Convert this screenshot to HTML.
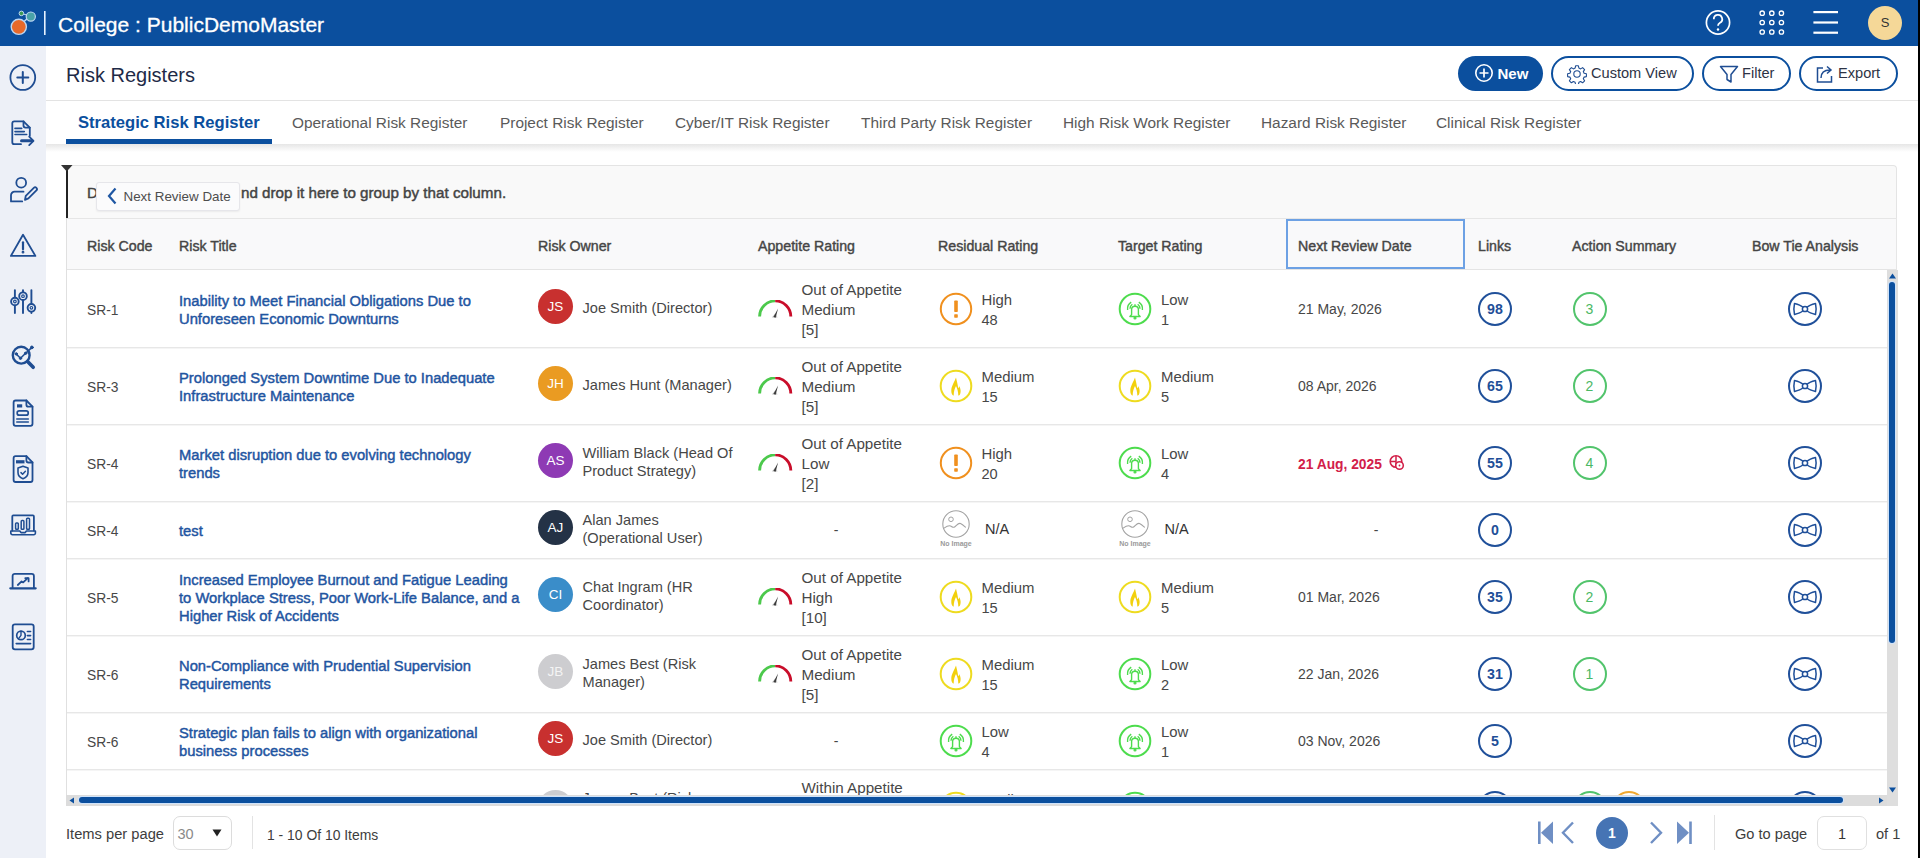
<!DOCTYPE html><html><head><meta charset="utf-8"><style>
html,body{margin:0;padding:0;width:1920px;height:858px;overflow:hidden;background:#fff;font-family:"Liberation Sans", sans-serif;}
.t{position:absolute;white-space:nowrap;}
.b{position:absolute;}
</style></head><body><div class="b" style="left:0px;top:0px;width:1918px;height:46px;background:#0b4f9e"></div><div class="b" style="left:1918px;top:0px;width:2px;height:858px;background:#000"></div><svg class="b" style="left:0px;top:0px;" width="46" height="46" viewBox="0 0 46 46"><circle cx="18.8" cy="26.8" r="7.6" fill="#e8692a" stroke="#bcd6f2" stroke-width="1.4"/>
<line x1="24" y1="21.5" x2="28" y2="18" stroke="#bcd6f2" stroke-width="1.6"/>
<circle cx="30.8" cy="16.6" r="4.6" fill="#4aa3a8" stroke="#bcd6f2" stroke-width="1.2"/>
<line x1="23" y1="14" x2="27" y2="15" stroke="#bcd6f2" stroke-width="1.2"/>
<circle cx="21.4" cy="13.4" r="2.3" fill="#3b9a55" stroke="#bcd6f2" stroke-width="1"/>
<rect x="44" y="11" width="1.6" height="24" fill="#e6f2ff"/></svg><div class="t " style="left:58px;top:12.42px;font-size:21px;line-height:25.2px;color:#fff;font-weight:400;;-webkit-text-stroke:0.3px #fff">College : PublicDemoMaster</div><svg class="b" style="left:1700px;top:4px;" width="36" height="36" viewBox="0 0 36 36"><circle cx="18" cy="18.5" r="11.6" fill="none" stroke="#fff" stroke-width="1.7"/>
<path d="M13.8 15.2 a4.2 4.2 0 1 1 6.2 3.6 c-1.4 .8 -2 1.5 -2 3" fill="none" stroke="#fff" stroke-width="1.8"/>
<circle cx="18" cy="25.5" r="1.2" fill="#fff"/></svg><svg class="b" style="left:1754px;top:4px;" width="36" height="36" viewBox="0 0 36 36"><circle cx="8.2" cy="9.2" r="2.2" fill="none" stroke="#fff" stroke-width="1.3"/><circle cx="8.2" cy="18.5" r="2.2" fill="none" stroke="#fff" stroke-width="1.3"/><circle cx="8.2" cy="28" r="2.2" fill="none" stroke="#fff" stroke-width="1.3"/><circle cx="17.8" cy="9.2" r="2.2" fill="none" stroke="#fff" stroke-width="1.3"/><circle cx="17.8" cy="18.5" r="2.2" fill="none" stroke="#fff" stroke-width="1.3"/><circle cx="17.8" cy="28" r="2.2" fill="none" stroke="#fff" stroke-width="1.3"/><circle cx="27.4" cy="9.2" r="2.2" fill="none" stroke="#fff" stroke-width="1.3"/><circle cx="27.4" cy="18.5" r="2.2" fill="none" stroke="#fff" stroke-width="1.3"/><circle cx="27.4" cy="28" r="2.2" fill="none" stroke="#fff" stroke-width="1.3"/></svg><svg class="b" style="left:1810px;top:4px;" width="32" height="36" viewBox="0 0 32 36"><rect x="3.4" y="7" width="24.6" height="2.2" fill="#fff"/><rect x="3.4" y="17.4" width="24.6" height="2.2" fill="#fff"/><rect x="3.4" y="27.6" width="24.6" height="2.2" fill="#fff"/></svg><div class="b" style="left:1868px;top:6px;width:34px;height:34px;background:#f5d898;border-radius:50%"></div><div class="t" style="left:1785.0px;width:200px;text-align:center;top:15.20px;font-size:13px;line-height:15.6px;color:#333;font-weight:400;">S</div><div class="b" style="left:0px;top:46px;width:46px;height:812px;background:#edf0f7"></div><svg class="b" style="left:0px;top:0px;" width="46" height="700" viewBox="0 0 46 700"><g fill="none" stroke="#1f4d92" stroke-width="1.8" stroke-linecap="round" stroke-linejoin="round">
<circle cx="22.8" cy="77.5" r="12.4"/><path d="M22.8 72v11M17.3 77.5h11" stroke-width="2"/>
<path d="M21 144.2H14.3a2 2 0 0 1-2-2V123.3a2 2 0 0 1 2-2h9.2l6.3 6.3v8.2"/><path d="M23.5 121.3v4.3a2 2 0 0 0 2 2h4.3"/>
<path d="M15 128.4h6.7M15 131.6h9.3M15 134.5h11.7" stroke-width="1.6"/>
<path d="M21.5 140.8h10.5" stroke-width="3"/><path d="M29.2 136.6l4.3 4.2-4.3 4.3"/>
<circle cx="21.2" cy="182.7" r="4.9"/><path d="M23.5 191.7h-8.9a3.6 3.6 0 0 0-3.6 3.6v6.1h11.2"/><path d="M25 199.8l.8-4 8-8a1.8 1.8 0 0 1 2.6 2.6l-8 8z"/>
<path d="M23 234.7L10.9 255.9h24.5z"/><path d="M23 242.3v7" stroke-width="2.2"/><circle cx="23" cy="252.2" r="0.6" stroke-width="1.6"/>
<path d="M14.9 290.1v22.9M23 290.1v22.9M31.4 290.1v22.9" stroke-width="1.9"/>
<circle cx="14.9" cy="301.5" r="3.8" fill="#edf0f7" stroke-width="1.9"/><circle cx="23" cy="296.2" r="3.8" fill="#edf0f7" stroke-width="1.9"/><circle cx="31.4" cy="307.8" r="3.8" fill="#edf0f7" stroke-width="1.9"/>
<circle cx="14.9" cy="301.5" r="1.3" stroke-width="1.2"/><circle cx="23" cy="296.2" r="1.3" stroke-width="1.2"/><circle cx="31.4" cy="307.8" r="1.3" stroke-width="1.2"/>
<circle cx="21.2" cy="355.2" r="8.4" stroke-width="2.4"/><path d="M27.6 361.5l5.6 5.8" stroke-width="3.6"/>
<path d="M16.2 354l4.3 4.3 5.1-5 6.3-5.9" stroke-width="1.6"/><circle cx="16.3" cy="353.9" r="1.2" fill="#1f4d92" stroke-width="1"/><circle cx="20.5" cy="358.3" r="1.2" fill="#1f4d92" stroke-width="1"/><circle cx="25.6" cy="353.3" r="1.2" fill="#1f4d92" stroke-width="1"/><circle cx="31.9" cy="347.4" r="1.4" fill="#1f4d92" stroke-width="1"/>
<path d="M15.6 400.5h10.8l6.1 6.2v17.1a2 2 0 0 1-2 2H15.6a2 2 0 0 1-2-2V402.5a2 2 0 0 1 2-2z"/><path d="M26.4 400.5v4.2a2 2 0 0 0 2 2h4.1"/>
<path d="M17 405.9h5.2" stroke-width="3.2" stroke-linecap="butt"/><rect x="17.2" y="410.8" width="11" height="4.4" rx="2" stroke-width="1.7"/><path d="M16.8 419h11.5M16.8 422h11.5" stroke-width="1.6"/>
<path d="M15.6 456.2h10.8l6.1 6.2v17.6a2 2 0 0 1-2 2H15.6a2 2 0 0 1-2-2V458.2a2 2 0 0 1 2-2z"/><path d="M26.4 456.2v4.3a2 2 0 0 0 2 2h4.1"/>
<path d="M16 461.8h8.5" stroke-width="3.2" stroke-linecap="butt"/><path d="M23 466.3l5 1.8v4.3c0 3.1-2.3 5.3-5 6.3-2.7-1-5-3.2-5-6.3v-4.3z" stroke-width="1.6"/><path d="M21 472.6l1.6 1.6 2.8-2.9" stroke-width="1.5"/>
<path d="M12.3 530.6V516.4a1 1 0 0 1 1-1h19.6a1 1 0 0 1 1 1v14.2"/><path d="M10.8 531h9l1.2 1.6h4.2l1.2-1.6h9v2.1a1.6 1.6 0 0 1-1.6 1.6H12.4a1.6 1.6 0 0 1-1.6-1.6z" stroke-width="1.6"/>
<rect x="15.6" y="523" width="2.7" height="6.3" rx="0.8" stroke-width="1.5"/><rect x="21.2" y="520.6" width="2.7" height="8.7" rx="0.8" stroke-width="1.5"/><rect x="26.6" y="518.3" width="2.9" height="11" rx="0.8" stroke-width="1.5"/>
<path d="M12.6 587.8V576a2.2 2.2 0 0 1 2.2-2.2h16.9a2.2 2.2 0 0 1 2.2 2.2v11.8"/><path d="M10.3 588.3h25.4" stroke-width="2.2"/>
<path d="M17.8 585l3.8-3.6 1.6 1 4.5-4.2" stroke-width="1.8"/><path d="M25.3 578.2h3.3v3.2" stroke-width="1.8"/>
<rect x="12.7" y="624.3" width="21" height="25" rx="2.3"/><circle cx="21" cy="635.4" r="4.3" stroke-width="1.7"/><path d="M21 631.1v4.3l-2.6 3.5" stroke-width="1.4"/>
<path d="M27.4 631.5h3.2M27.4 635.6h3.2M27.4 639.5h3.2M16.2 643.6h14.4" stroke-width="1.6"/>
</g></svg><div class="t " style="left:66px;top:63.07px;font-size:20px;line-height:24.0px;color:#1e2a47;font-weight:400;">Risk Registers</div><div class="b" style="left:46px;top:100px;width:1872px;height:1px;background:#e3e3e3"></div><div class="b" style="left:1458px;top:56px;width:85px;height:35px;background:#0b4f9e;border-radius:18px"></div><svg class="b" style="left:1474px;top:63px;" width="20" height="20" viewBox="0 0 20 20"><circle cx="10" cy="10" r="8.2" fill="none" stroke="#fff" stroke-width="1.6"/><path d="M10 5.5v9M5.5 10h9" stroke="#fff" stroke-width="1.7"/></svg><div class="t " style="left:1497.5px;top:64.80px;font-size:15px;line-height:18.0px;color:#fff;font-weight:700;">New</div><div class="b" style="left:1551px;top:56px;width:143px;height:35px;box-sizing:border-box;border:2px solid #0b4f9e;border-radius:18px;background:#fff"></div><div class="b" style="left:1702px;top:56px;width:89px;height:35px;box-sizing:border-box;border:2px solid #0b4f9e;border-radius:18px;background:#fff"></div><div class="b" style="left:1799px;top:56px;width:99px;height:35px;box-sizing:border-box;border:2px solid #0b4f9e;border-radius:18px;background:#fff"></div><svg class="b" style="left:1567px;top:64px;" width="20" height="20" viewBox="0 0 20 20"><circle cx="10" cy="10" r="3.2" fill="none" stroke="#1f4d92" stroke-width="1.1"/><path d="M8.6 1.8h2.8l.5 2.3 1.7.8 2-1.3 2 2-1.3 2 .8 1.7 2.3.5v2.8l-2.3.5-.8 1.7 1.3 2-2 2-2-1.3-1.7.8-.5 2.3h-2.8l-.5-2.3-1.7-.8-2 1.3-2-2 1.3-2-.8-1.7-2.3-.5v-2.8l2.3-.5.8-1.7-1.3-2 2-2 2 1.3 1.7-.8z" fill="none" stroke="#1f4d92" stroke-width="1.1" stroke-linejoin="round"/></svg><div class="t " style="left:1591px;top:65.18px;font-size:14.6px;line-height:17.52px;color:#2d3345;font-weight:400;">Custom View</div><svg class="b" style="left:1719px;top:64px;" width="20" height="20" viewBox="0 0 20 20"><path d="M1.5 2.5h17l-6.5 8v7.5l-4 -2.5v-5z" fill="none" stroke="#1f4d92" stroke-width="1.5" stroke-linejoin="round"/></svg><div class="t " style="left:1742px;top:65.18px;font-size:14.6px;line-height:17.52px;color:#2d3345;font-weight:400;">Filter</div><svg class="b" style="left:1815px;top:64px;" width="20" height="20" viewBox="0 0 20 20"><path d="M8 4H2.5v14h14v-6" fill="none" stroke="#1f4d92" stroke-width="1.5"/><path d="M6 14c0-5 3-8 9-8M12 2.5l4 3.5-4 3.5" fill="none" stroke="#1f4d92" stroke-width="1.5"/></svg><div class="t " style="left:1838px;top:65.18px;font-size:14.6px;line-height:17.52px;color:#2d3345;font-weight:400;">Export</div><div class="b" style="left:46px;top:144px;width:1872px;height:8px;background:linear-gradient(#e6e6e6,#fff)"></div><div class="t " style="left:78px;top:112.79px;font-size:16.6px;line-height:19.92px;color:#0b4f9e;font-weight:700;">Strategic Risk Register</div><div class="t " style="left:292px;top:113.92px;font-size:15.4px;line-height:18.48px;color:#5a5a5a;font-weight:400;">Operational Risk Register</div><div class="t " style="left:500px;top:113.92px;font-size:15.4px;line-height:18.48px;color:#5a5a5a;font-weight:400;">Project Risk Register</div><div class="t " style="left:675px;top:113.92px;font-size:15.4px;line-height:18.48px;color:#5a5a5a;font-weight:400;">Cyber/IT Risk Register</div><div class="t " style="left:861px;top:113.92px;font-size:15.4px;line-height:18.48px;color:#5a5a5a;font-weight:400;">Third Party Risk Register</div><div class="t " style="left:1063px;top:113.92px;font-size:15.4px;line-height:18.48px;color:#5a5a5a;font-weight:400;">High Risk Work Register</div><div class="t " style="left:1261px;top:113.92px;font-size:15.4px;line-height:18.48px;color:#5a5a5a;font-weight:400;">Hazard Risk Register</div><div class="t " style="left:1436px;top:113.92px;font-size:15.4px;line-height:18.48px;color:#5a5a5a;font-weight:400;">Clinical Risk Register</div><div class="b" style="left:66px;top:139px;width:206px;height:5px;background:#0b4f9e"></div><div class="b" style="left:66px;top:165px;width:1831px;height:53px;background:#f9f9f9;box-sizing:border-box;border-top:1px solid #e4e4e4;border-right:1px solid #e4e4e4;border-top-right-radius:4px"></div><div class="t " style="left:87px;top:183.80px;font-size:15px;line-height:18.0px;color:#444;font-weight:400;;-webkit-text-stroke:0.45px #444">D</div><div class="t " style="left:241px;top:183.61px;font-size:15.2px;line-height:18.24px;color:#444;font-weight:400;;-webkit-text-stroke:0.45px #444">nd drop it here to group by that column.</div><div class="b" style="left:95.5px;top:182px;width:144px;height:29px;background:#fbfbfc;border:1px solid #e6e6ea;border-radius:3px;box-sizing:border-box;box-shadow:0 1px 2px rgba(0,0,0,0.06)"></div><svg class="b" style="left:104px;top:186px;" width="16" height="20" viewBox="0 0 16 20"><path d="M11.5 2.5L5 10l6.5 7.5" fill="none" stroke="#1f57a3" stroke-width="2.2"/></svg><div class="t " style="left:123.5px;top:189.02px;font-size:13.4px;line-height:16.08px;color:#4d4d4d;font-weight:400;">Next Review Date</div><div class="b" style="left:66px;top:165px;width:2px;height:53px;background:#222"></div><svg class="b" style="left:61px;top:165px;" width="12" height="8" viewBox="0 0 12 8"><path d="M0 0h11.5L5.75 6.5z" fill="#333"/></svg><div class="b" style="left:66px;top:218px;width:1831px;height:52px;background:#f9f9fa;box-sizing:border-box;border-top:1px solid #e6e6e6;border-bottom:1px solid #e4e4e4;border-right:1px solid #e6e6e6"></div><div class="b" style="left:66px;top:218px;width:1px;height:588px;background:#e0e0e0"></div><div class="t " style="left:87px;top:238.06px;font-size:14.2px;line-height:17.04px;color:#454545;font-weight:400;;-webkit-text-stroke:0.4px #454545">Risk Code</div><div class="t " style="left:179px;top:238.06px;font-size:14.2px;line-height:17.04px;color:#454545;font-weight:400;;-webkit-text-stroke:0.4px #454545">Risk Title</div><div class="t " style="left:538px;top:238.06px;font-size:14.2px;line-height:17.04px;color:#454545;font-weight:400;;-webkit-text-stroke:0.4px #454545">Risk Owner</div><div class="t " style="left:758px;top:238.06px;font-size:14.2px;line-height:17.04px;color:#454545;font-weight:400;;-webkit-text-stroke:0.4px #454545">Appetite Rating</div><div class="t " style="left:938px;top:238.06px;font-size:14.2px;line-height:17.04px;color:#454545;font-weight:400;;-webkit-text-stroke:0.4px #454545">Residual Rating</div><div class="t " style="left:1118px;top:238.06px;font-size:14.2px;line-height:17.04px;color:#454545;font-weight:400;;-webkit-text-stroke:0.4px #454545">Target Rating</div><div class="t " style="left:1298px;top:238.06px;font-size:14.2px;line-height:17.04px;color:#454545;font-weight:400;;-webkit-text-stroke:0.4px #454545">Next Review Date</div><div class="t " style="left:1478px;top:238.06px;font-size:14.2px;line-height:17.04px;color:#454545;font-weight:400;;-webkit-text-stroke:0.4px #454545">Links</div><div class="t " style="left:1572px;top:238.06px;font-size:14.2px;line-height:17.04px;color:#454545;font-weight:400;;-webkit-text-stroke:0.4px #454545">Action Summary</div><div class="t " style="left:1752px;top:238.06px;font-size:14.2px;line-height:17.04px;color:#454545;font-weight:400;;-webkit-text-stroke:0.4px #454545">Bow Tie Analysis</div><div class="b" style="left:1286px;top:219px;width:179px;height:50px;box-sizing:border-box;border:2px solid #6da1e4"></div><div class="b" style="left:67px;top:347px;width:1820px;height:1px;background:#e7e7e7"></div><div class="b" style="left:67px;top:348px;width:1820px;height:1px;background:#f5f5f5"></div><div class="t " style="left:87px;top:302.94px;font-size:13.8px;line-height:16.56px;color:#474747;font-weight:400;">SR-1</div><div class="t " style="left:179px;top:292.84px;font-size:14.75px;line-height:17.7px;color:#1f55a1;font-weight:400;;-webkit-text-stroke:0.45px #1f55a1">Inability to Meet Financial Obligations Due to</div><div class="t " style="left:179px;top:310.84px;font-size:14.75px;line-height:17.7px;color:#1f55a1;font-weight:400;;-webkit-text-stroke:0.45px #1f55a1">Unforeseen Economic Downturns</div><div class="b" style="left:538px;top:289.0px;width:35px;height:35px;background:#c8302f;border-radius:50%"></div><div class="t" style="left:455.5px;width:200px;text-align:center;top:298.72px;font-size:13.5px;line-height:16.2px;color:#fff;font-weight:400;">JS</div><div class="t " style="left:582.5px;top:299.68px;font-size:14.6px;line-height:17.52px;color:#474747;font-weight:400;">Joe Smith (Director)</div><svg class="b" style="left:757px;top:299.7px;" width="36" height="22" viewBox="0 0 36 22"><path d="M2.6 16.5A15.6 15.6 0 0 1 18.2 0.9" fill="none" stroke="#4cc94c" stroke-width="2.9"/><path d="M18.2 0.9A15.6 15.6 0 0 1 33.8 16.5" fill="none" stroke="#c90d2a" stroke-width="2.9"/><path d="M14.8 17.6L18.3 13.2 20.6 17.6z" fill="#c8c8c8"/><path d="M21.1 8.6L18.6 17.8 16.4 17z" fill="#3a3a3a"/></svg><div class="t " style="left:801.5px;top:280.61px;font-size:15.2px;line-height:18.24px;color:#474747;font-weight:400;">Out of Appetite</div><div class="t " style="left:801.5px;top:300.61px;font-size:15.2px;line-height:18.24px;color:#474747;font-weight:400;">Medium</div><div class="t " style="left:801.5px;top:320.61px;font-size:15.2px;line-height:18.24px;color:#474747;font-weight:400;">[5]</div><svg class="b" style="left:938.5px;top:292.0px;" width="34" height="34" viewBox="0 0 34 34"><circle cx="17" cy="17" r="15.2" fill="none" stroke="#f0901e" stroke-width="2"/><rect x="15.2" y="8.5" width="3.6" height="11.5" rx="0.8" fill="#f0901e"/><rect x="15.2" y="22.3" width="3.6" height="3.4" rx="0.6" fill="#f0901e"/></svg><div class="t " style="left:981.5px;top:292.10px;font-size:14.9px;line-height:17.88px;color:#474747;font-weight:400;">High</div><div class="t " style="left:981.5px;top:311.98px;font-size:14.6px;line-height:17.52px;color:#474747;font-weight:400;">48</div><svg class="b" style="left:1118px;top:292.0px;" width="34" height="34" viewBox="0 0 34 34"><circle cx="17" cy="17" r="15.3" fill="none" stroke="#4ddc4d" stroke-width="2"/><g fill="none" stroke="#4ddc4d" stroke-width="1.4"><path d="M13.6 22.6V17.6a3.4 3.4 0 0 1 6.8 0v5l1.7 1.9H11.9z" stroke-linejoin="round"/><path d="M17 12.2v2"/><circle cx="17" cy="26" r="0.9"/><path d="M9.6 18A8 8 0 0 1 13.2 10.2M12 16.8A5.5 5.5 0 0 1 14.3 12.3M24.4 18A8 8 0 0 0 20.8 10.2M22 16.8A5.5 5.5 0 0 0 19.7 12.3"/></g></svg><div class="t " style="left:1161px;top:292.10px;font-size:14.9px;line-height:17.88px;color:#474747;font-weight:400;">Low</div><div class="t " style="left:1161px;top:311.98px;font-size:14.6px;line-height:17.52px;color:#474747;font-weight:400;">1</div><div class="t " style="left:1298px;top:301.15px;font-size:14px;line-height:16.8px;color:#474747;font-weight:400;">21 May, 2026</div><div class="b" style="left:1478px;top:292.0px;width:34px;height:34px;box-sizing:border-box;border:2px solid #20509a;border-radius:50%"></div><div class="t" style="left:1478.0px;width:34px;text-align:center;top:300.56px;font-size:14.2px;line-height:17.04px;color:#1f4f98;font-weight:700;">98</div><div class="b" style="left:1572.5px;top:292.0px;width:34px;height:34px;box-sizing:border-box;border:2px solid #52c46c;border-radius:50%"></div><div class="t" style="left:1572.5px;width:34px;text-align:center;top:300.75px;font-size:14px;line-height:16.8px;color:#4bb865;font-weight:400;">3</div><div class="b" style="left:1787.5px;top:292.0px;width:34px;height:34px;box-sizing:border-box;border:2px solid #20509a;border-radius:50%"></div><svg class="b" style="left:1792px;top:301.0px;" width="26" height="16" viewBox="0 0 26 16"><path d="M2.5 2.5c0 0 6 1.5 8.2 3.5h4.6c2.2-2 8.2-3.5 8.2-3.5 .8 3.5 .8 7.5 0 11 0 0-6-1.5-8.2-3.5h-4.6c-2.2 2-8.2 3.5-8.2 3.5-.8-3.5-.8-7.5 0-11z" fill="none" stroke="#20509a" stroke-width="1.5" stroke-linejoin="round"/><circle cx="13" cy="8" r="2.6" fill="#fff" stroke="#20509a" stroke-width="1.5"/></svg><div class="b" style="left:67px;top:424px;width:1820px;height:1px;background:#e7e7e7"></div><div class="b" style="left:67px;top:425px;width:1820px;height:1px;background:#f5f5f5"></div><div class="t " style="left:87px;top:379.94px;font-size:13.8px;line-height:16.56px;color:#474747;font-weight:400;">SR-3</div><div class="t " style="left:179px;top:369.84px;font-size:14.75px;line-height:17.7px;color:#1f55a1;font-weight:400;;-webkit-text-stroke:0.45px #1f55a1">Prolonged System Downtime Due to Inadequate</div><div class="t " style="left:179px;top:387.84px;font-size:14.75px;line-height:17.7px;color:#1f55a1;font-weight:400;;-webkit-text-stroke:0.45px #1f55a1">Infrastructure Maintenance</div><div class="b" style="left:538px;top:366.0px;width:35px;height:35px;background:#ea9b22;border-radius:50%"></div><div class="t" style="left:455.5px;width:200px;text-align:center;top:375.72px;font-size:13.5px;line-height:16.2px;color:#fff;font-weight:400;">JH</div><div class="t " style="left:582.5px;top:376.68px;font-size:14.6px;line-height:17.52px;color:#474747;font-weight:400;">James Hunt (Manager)</div><svg class="b" style="left:757px;top:376.7px;" width="36" height="22" viewBox="0 0 36 22"><path d="M2.6 16.5A15.6 15.6 0 0 1 18.2 0.9" fill="none" stroke="#4cc94c" stroke-width="2.9"/><path d="M18.2 0.9A15.6 15.6 0 0 1 33.8 16.5" fill="none" stroke="#c90d2a" stroke-width="2.9"/><path d="M14.8 17.6L18.3 13.2 20.6 17.6z" fill="#c8c8c8"/><path d="M21.1 8.6L18.6 17.8 16.4 17z" fill="#3a3a3a"/></svg><div class="t " style="left:801.5px;top:357.61px;font-size:15.2px;line-height:18.24px;color:#474747;font-weight:400;">Out of Appetite</div><div class="t " style="left:801.5px;top:377.61px;font-size:15.2px;line-height:18.24px;color:#474747;font-weight:400;">Medium</div><div class="t " style="left:801.5px;top:397.61px;font-size:15.2px;line-height:18.24px;color:#474747;font-weight:400;">[5]</div><svg class="b" style="left:938.5px;top:369.0px;" width="34" height="34" viewBox="0 0 34 34"><circle cx="17" cy="17" r="15.3" fill="none" stroke="#eedb1f" stroke-width="2"/><path d="M17 8.4C15.6 12.5 12.2 17 12.3 21.8c0 2.4.7 4 1.8 4.7h.6c0-3.6 1-7 2.3-9.5 1.3 2.5 2.3 5.9 2.3 9.5h.7c1.3-.9 1.7-2.8 1.6-5-.1-1.8-.8-3.4-1.4-4.3-.2 1-.5 1.6-1 2-.5-4.2-1.5-7.6-2.2-10.8z" fill="#f2d00c"/></svg><div class="t " style="left:981.5px;top:369.10px;font-size:14.9px;line-height:17.88px;color:#474747;font-weight:400;">Medium</div><div class="t " style="left:981.5px;top:388.98px;font-size:14.6px;line-height:17.52px;color:#474747;font-weight:400;">15</div><svg class="b" style="left:1118px;top:369.0px;" width="34" height="34" viewBox="0 0 34 34"><circle cx="17" cy="17" r="15.3" fill="none" stroke="#eedb1f" stroke-width="2"/><path d="M17 8.4C15.6 12.5 12.2 17 12.3 21.8c0 2.4.7 4 1.8 4.7h.6c0-3.6 1-7 2.3-9.5 1.3 2.5 2.3 5.9 2.3 9.5h.7c1.3-.9 1.7-2.8 1.6-5-.1-1.8-.8-3.4-1.4-4.3-.2 1-.5 1.6-1 2-.5-4.2-1.5-7.6-2.2-10.8z" fill="#f2d00c"/></svg><div class="t " style="left:1161px;top:369.10px;font-size:14.9px;line-height:17.88px;color:#474747;font-weight:400;">Medium</div><div class="t " style="left:1161px;top:388.98px;font-size:14.6px;line-height:17.52px;color:#474747;font-weight:400;">5</div><div class="t " style="left:1298px;top:378.15px;font-size:14px;line-height:16.8px;color:#474747;font-weight:400;">08 Apr, 2026</div><div class="b" style="left:1478px;top:369.0px;width:34px;height:34px;box-sizing:border-box;border:2px solid #20509a;border-radius:50%"></div><div class="t" style="left:1478.0px;width:34px;text-align:center;top:377.56px;font-size:14.2px;line-height:17.04px;color:#1f4f98;font-weight:700;">65</div><div class="b" style="left:1572.5px;top:369.0px;width:34px;height:34px;box-sizing:border-box;border:2px solid #52c46c;border-radius:50%"></div><div class="t" style="left:1572.5px;width:34px;text-align:center;top:377.75px;font-size:14px;line-height:16.8px;color:#4bb865;font-weight:400;">2</div><div class="b" style="left:1787.5px;top:369.0px;width:34px;height:34px;box-sizing:border-box;border:2px solid #20509a;border-radius:50%"></div><svg class="b" style="left:1792px;top:378.0px;" width="26" height="16" viewBox="0 0 26 16"><path d="M2.5 2.5c0 0 6 1.5 8.2 3.5h4.6c2.2-2 8.2-3.5 8.2-3.5 .8 3.5 .8 7.5 0 11 0 0-6-1.5-8.2-3.5h-4.6c-2.2 2-8.2 3.5-8.2 3.5-.8-3.5-.8-7.5 0-11z" fill="none" stroke="#20509a" stroke-width="1.5" stroke-linejoin="round"/><circle cx="13" cy="8" r="2.6" fill="#fff" stroke="#20509a" stroke-width="1.5"/></svg><div class="b" style="left:67px;top:501px;width:1820px;height:1px;background:#e7e7e7"></div><div class="b" style="left:67px;top:502px;width:1820px;height:1px;background:#f5f5f5"></div><div class="t " style="left:87px;top:456.94px;font-size:13.8px;line-height:16.56px;color:#474747;font-weight:400;">SR-4</div><div class="t " style="left:179px;top:446.84px;font-size:14.75px;line-height:17.7px;color:#1f55a1;font-weight:400;;-webkit-text-stroke:0.45px #1f55a1">Market disruption due to evolving technology</div><div class="t " style="left:179px;top:464.84px;font-size:14.75px;line-height:17.7px;color:#1f55a1;font-weight:400;;-webkit-text-stroke:0.45px #1f55a1">trends</div><div class="b" style="left:538px;top:443.0px;width:35px;height:35px;background:#8e3ab4;border-radius:50%"></div><div class="t" style="left:455.5px;width:200px;text-align:center;top:452.72px;font-size:13.5px;line-height:16.2px;color:#fff;font-weight:400;">AS</div><div class="t " style="left:582.5px;top:444.68px;font-size:14.6px;line-height:17.52px;color:#474747;font-weight:400;">William Black (Head Of</div><div class="t " style="left:582.5px;top:462.68px;font-size:14.6px;line-height:17.52px;color:#474747;font-weight:400;">Product Strategy)</div><svg class="b" style="left:757px;top:453.7px;" width="36" height="22" viewBox="0 0 36 22"><path d="M2.6 16.5A15.6 15.6 0 0 1 18.2 0.9" fill="none" stroke="#4cc94c" stroke-width="2.9"/><path d="M18.2 0.9A15.6 15.6 0 0 1 33.8 16.5" fill="none" stroke="#c90d2a" stroke-width="2.9"/><path d="M14.8 17.6L18.3 13.2 20.6 17.6z" fill="#c8c8c8"/><path d="M21.1 8.6L18.6 17.8 16.4 17z" fill="#3a3a3a"/></svg><div class="t " style="left:801.5px;top:434.61px;font-size:15.2px;line-height:18.24px;color:#474747;font-weight:400;">Out of Appetite</div><div class="t " style="left:801.5px;top:454.61px;font-size:15.2px;line-height:18.24px;color:#474747;font-weight:400;">Low</div><div class="t " style="left:801.5px;top:474.61px;font-size:15.2px;line-height:18.24px;color:#474747;font-weight:400;">[2]</div><svg class="b" style="left:938.5px;top:446.0px;" width="34" height="34" viewBox="0 0 34 34"><circle cx="17" cy="17" r="15.2" fill="none" stroke="#f0901e" stroke-width="2"/><rect x="15.2" y="8.5" width="3.6" height="11.5" rx="0.8" fill="#f0901e"/><rect x="15.2" y="22.3" width="3.6" height="3.4" rx="0.6" fill="#f0901e"/></svg><div class="t " style="left:981.5px;top:446.10px;font-size:14.9px;line-height:17.88px;color:#474747;font-weight:400;">High</div><div class="t " style="left:981.5px;top:465.98px;font-size:14.6px;line-height:17.52px;color:#474747;font-weight:400;">20</div><svg class="b" style="left:1118px;top:446.0px;" width="34" height="34" viewBox="0 0 34 34"><circle cx="17" cy="17" r="15.3" fill="none" stroke="#4ddc4d" stroke-width="2"/><g fill="none" stroke="#4ddc4d" stroke-width="1.4"><path d="M13.6 22.6V17.6a3.4 3.4 0 0 1 6.8 0v5l1.7 1.9H11.9z" stroke-linejoin="round"/><path d="M17 12.2v2"/><circle cx="17" cy="26" r="0.9"/><path d="M9.6 18A8 8 0 0 1 13.2 10.2M12 16.8A5.5 5.5 0 0 1 14.3 12.3M24.4 18A8 8 0 0 0 20.8 10.2M22 16.8A5.5 5.5 0 0 0 19.7 12.3"/></g></svg><div class="t " style="left:1161px;top:446.10px;font-size:14.9px;line-height:17.88px;color:#474747;font-weight:400;">Low</div><div class="t " style="left:1161px;top:465.98px;font-size:14.6px;line-height:17.52px;color:#474747;font-weight:400;">4</div><div class="t " style="left:1298px;top:456.54px;font-size:13.8px;line-height:16.56px;color:#d22049;font-weight:700;">21 Aug, 2025</div><svg class="b" style="left:1388px;top:453.5px;" width="18" height="18" viewBox="0 0 18 18"><circle cx="8" cy="7.5" r="5.8" fill="none" stroke="#d22049" stroke-width="1.6"/><path d="M8 2v5.5H2.5M8 7.5v5.5" fill="none" stroke="#d22049" stroke-width="1.5"/><circle cx="11.5" cy="11.5" r="3.8" fill="#fff" stroke="#d22049" stroke-width="1.6"/><circle cx="11.5" cy="11.5" r="0.9" fill="#d22049"/></svg><div class="b" style="left:1478px;top:446.0px;width:34px;height:34px;box-sizing:border-box;border:2px solid #20509a;border-radius:50%"></div><div class="t" style="left:1478.0px;width:34px;text-align:center;top:454.56px;font-size:14.2px;line-height:17.04px;color:#1f4f98;font-weight:700;">55</div><div class="b" style="left:1572.5px;top:446.0px;width:34px;height:34px;box-sizing:border-box;border:2px solid #52c46c;border-radius:50%"></div><div class="t" style="left:1572.5px;width:34px;text-align:center;top:454.75px;font-size:14px;line-height:16.8px;color:#4bb865;font-weight:400;">4</div><div class="b" style="left:1787.5px;top:446.0px;width:34px;height:34px;box-sizing:border-box;border:2px solid #20509a;border-radius:50%"></div><svg class="b" style="left:1792px;top:455.0px;" width="26" height="16" viewBox="0 0 26 16"><path d="M2.5 2.5c0 0 6 1.5 8.2 3.5h4.6c2.2-2 8.2-3.5 8.2-3.5 .8 3.5 .8 7.5 0 11 0 0-6-1.5-8.2-3.5h-4.6c-2.2 2-8.2 3.5-8.2 3.5-.8-3.5-.8-7.5 0-11z" fill="none" stroke="#20509a" stroke-width="1.5" stroke-linejoin="round"/><circle cx="13" cy="8" r="2.6" fill="#fff" stroke="#20509a" stroke-width="1.5"/></svg><div class="b" style="left:67px;top:558px;width:1820px;height:1px;background:#e7e7e7"></div><div class="b" style="left:67px;top:559px;width:1820px;height:1px;background:#f5f5f5"></div><div class="t " style="left:87px;top:523.94px;font-size:13.8px;line-height:16.56px;color:#474747;font-weight:400;">SR-4</div><div class="t " style="left:179px;top:522.84px;font-size:14.75px;line-height:17.7px;color:#1f55a1;font-weight:400;;-webkit-text-stroke:0.45px #1f55a1">test</div><div class="b" style="left:538px;top:510.0px;width:35px;height:35px;background:#243246;border-radius:50%"></div><div class="t" style="left:455.5px;width:200px;text-align:center;top:519.72px;font-size:13.5px;line-height:16.2px;color:#fff;font-weight:400;">AJ</div><div class="t " style="left:582.5px;top:511.68px;font-size:14.6px;line-height:17.52px;color:#474747;font-weight:400;">Alan James</div><div class="t " style="left:582.5px;top:529.68px;font-size:14.6px;line-height:17.52px;color:#474747;font-weight:400;">(Operational User)</div><div class="t" style="left:826.0px;width:20px;text-align:center;top:521.75px;font-size:14px;line-height:16.8px;color:#474747;font-weight:400;">-</div><svg class="b" style="left:938.5px;top:510.0px;" width="34" height="38" viewBox="0 0 34 38"><circle cx="17" cy="14" r="13.2" fill="none" stroke="#a3a3a3" stroke-width="1.1"/><circle cx="12" cy="9.3" r="2.3" fill="none" stroke="#a3a3a3" stroke-width="1"/><path d="M4.5 18.5c3-2 5-3.5 7-2.5s2.5 2 4 1c2-1.5 4-4.5 6-3.5s3 2 5.2 4" fill="none" stroke="#a3a3a3" stroke-width="1.1"/><text x="17" y="36" text-anchor="middle" font-family="Liberation Sans" font-size="7" font-weight="700" fill="#9a9a9a">No Image</text></svg><div class="t " style="left:985.0px;top:521.28px;font-size:14.5px;line-height:17.4px;color:#333;font-weight:400;">N/A</div><svg class="b" style="left:1118px;top:510.0px;" width="34" height="38" viewBox="0 0 34 38"><circle cx="17" cy="14" r="13.2" fill="none" stroke="#a3a3a3" stroke-width="1.1"/><circle cx="12" cy="9.3" r="2.3" fill="none" stroke="#a3a3a3" stroke-width="1"/><path d="M4.5 18.5c3-2 5-3.5 7-2.5s2.5 2 4 1c2-1.5 4-4.5 6-3.5s3 2 5.2 4" fill="none" stroke="#a3a3a3" stroke-width="1.1"/><text x="17" y="36" text-anchor="middle" font-family="Liberation Sans" font-size="7" font-weight="700" fill="#9a9a9a">No Image</text></svg><div class="t " style="left:1164.5px;top:521.28px;font-size:14.5px;line-height:17.4px;color:#333;font-weight:400;">N/A</div><div class="t" style="left:1366.0px;width:20px;text-align:center;top:521.75px;font-size:14px;line-height:16.8px;color:#474747;font-weight:400;">-</div><div class="b" style="left:1478px;top:513.0px;width:34px;height:34px;box-sizing:border-box;border:2px solid #20509a;border-radius:50%"></div><div class="t" style="left:1478.0px;width:34px;text-align:center;top:521.56px;font-size:14.2px;line-height:17.04px;color:#1f4f98;font-weight:700;">0</div><div class="b" style="left:1787.5px;top:513.0px;width:34px;height:34px;box-sizing:border-box;border:2px solid #20509a;border-radius:50%"></div><svg class="b" style="left:1792px;top:522.0px;" width="26" height="16" viewBox="0 0 26 16"><path d="M2.5 2.5c0 0 6 1.5 8.2 3.5h4.6c2.2-2 8.2-3.5 8.2-3.5 .8 3.5 .8 7.5 0 11 0 0-6-1.5-8.2-3.5h-4.6c-2.2 2-8.2 3.5-8.2 3.5-.8-3.5-.8-7.5 0-11z" fill="none" stroke="#20509a" stroke-width="1.5" stroke-linejoin="round"/><circle cx="13" cy="8" r="2.6" fill="#fff" stroke="#20509a" stroke-width="1.5"/></svg><div class="b" style="left:67px;top:635px;width:1820px;height:1px;background:#e7e7e7"></div><div class="b" style="left:67px;top:636px;width:1820px;height:1px;background:#f5f5f5"></div><div class="t " style="left:87px;top:590.94px;font-size:13.8px;line-height:16.56px;color:#474747;font-weight:400;">SR-5</div><div class="t " style="left:179px;top:571.84px;font-size:14.75px;line-height:17.7px;color:#1f55a1;font-weight:400;;-webkit-text-stroke:0.45px #1f55a1">Increased Employee Burnout and Fatigue Leading</div><div class="t " style="left:179px;top:589.84px;font-size:14.75px;line-height:17.7px;color:#1f55a1;font-weight:400;;-webkit-text-stroke:0.45px #1f55a1">to Workplace Stress, Poor Work-Life Balance, and a</div><div class="t " style="left:179px;top:607.84px;font-size:14.75px;line-height:17.7px;color:#1f55a1;font-weight:400;;-webkit-text-stroke:0.45px #1f55a1">Higher Risk of Accidents</div><div class="b" style="left:538px;top:577.0px;width:35px;height:35px;background:#3a8dc9;border-radius:50%"></div><div class="t" style="left:455.5px;width:200px;text-align:center;top:586.72px;font-size:13.5px;line-height:16.2px;color:#fff;font-weight:400;">CI</div><div class="t " style="left:582.5px;top:578.68px;font-size:14.6px;line-height:17.52px;color:#474747;font-weight:400;">Chat Ingram (HR</div><div class="t " style="left:582.5px;top:596.68px;font-size:14.6px;line-height:17.52px;color:#474747;font-weight:400;">Coordinator)</div><svg class="b" style="left:757px;top:587.7px;" width="36" height="22" viewBox="0 0 36 22"><path d="M2.6 16.5A15.6 15.6 0 0 1 18.2 0.9" fill="none" stroke="#4cc94c" stroke-width="2.9"/><path d="M18.2 0.9A15.6 15.6 0 0 1 33.8 16.5" fill="none" stroke="#c90d2a" stroke-width="2.9"/><path d="M14.8 17.6L18.3 13.2 20.6 17.6z" fill="#c8c8c8"/><path d="M21.1 8.6L18.6 17.8 16.4 17z" fill="#3a3a3a"/></svg><div class="t " style="left:801.5px;top:568.61px;font-size:15.2px;line-height:18.24px;color:#474747;font-weight:400;">Out of Appetite</div><div class="t " style="left:801.5px;top:588.61px;font-size:15.2px;line-height:18.24px;color:#474747;font-weight:400;">High</div><div class="t " style="left:801.5px;top:608.61px;font-size:15.2px;line-height:18.24px;color:#474747;font-weight:400;">[10]</div><svg class="b" style="left:938.5px;top:580.0px;" width="34" height="34" viewBox="0 0 34 34"><circle cx="17" cy="17" r="15.3" fill="none" stroke="#eedb1f" stroke-width="2"/><path d="M17 8.4C15.6 12.5 12.2 17 12.3 21.8c0 2.4.7 4 1.8 4.7h.6c0-3.6 1-7 2.3-9.5 1.3 2.5 2.3 5.9 2.3 9.5h.7c1.3-.9 1.7-2.8 1.6-5-.1-1.8-.8-3.4-1.4-4.3-.2 1-.5 1.6-1 2-.5-4.2-1.5-7.6-2.2-10.8z" fill="#f2d00c"/></svg><div class="t " style="left:981.5px;top:580.10px;font-size:14.9px;line-height:17.88px;color:#474747;font-weight:400;">Medium</div><div class="t " style="left:981.5px;top:599.98px;font-size:14.6px;line-height:17.52px;color:#474747;font-weight:400;">15</div><svg class="b" style="left:1118px;top:580.0px;" width="34" height="34" viewBox="0 0 34 34"><circle cx="17" cy="17" r="15.3" fill="none" stroke="#eedb1f" stroke-width="2"/><path d="M17 8.4C15.6 12.5 12.2 17 12.3 21.8c0 2.4.7 4 1.8 4.7h.6c0-3.6 1-7 2.3-9.5 1.3 2.5 2.3 5.9 2.3 9.5h.7c1.3-.9 1.7-2.8 1.6-5-.1-1.8-.8-3.4-1.4-4.3-.2 1-.5 1.6-1 2-.5-4.2-1.5-7.6-2.2-10.8z" fill="#f2d00c"/></svg><div class="t " style="left:1161px;top:580.10px;font-size:14.9px;line-height:17.88px;color:#474747;font-weight:400;">Medium</div><div class="t " style="left:1161px;top:599.98px;font-size:14.6px;line-height:17.52px;color:#474747;font-weight:400;">5</div><div class="t " style="left:1298px;top:589.15px;font-size:14px;line-height:16.8px;color:#474747;font-weight:400;">01 Mar, 2026</div><div class="b" style="left:1478px;top:580.0px;width:34px;height:34px;box-sizing:border-box;border:2px solid #20509a;border-radius:50%"></div><div class="t" style="left:1478.0px;width:34px;text-align:center;top:588.56px;font-size:14.2px;line-height:17.04px;color:#1f4f98;font-weight:700;">35</div><div class="b" style="left:1572.5px;top:580.0px;width:34px;height:34px;box-sizing:border-box;border:2px solid #52c46c;border-radius:50%"></div><div class="t" style="left:1572.5px;width:34px;text-align:center;top:588.75px;font-size:14px;line-height:16.8px;color:#4bb865;font-weight:400;">2</div><div class="b" style="left:1787.5px;top:580.0px;width:34px;height:34px;box-sizing:border-box;border:2px solid #20509a;border-radius:50%"></div><svg class="b" style="left:1792px;top:589.0px;" width="26" height="16" viewBox="0 0 26 16"><path d="M2.5 2.5c0 0 6 1.5 8.2 3.5h4.6c2.2-2 8.2-3.5 8.2-3.5 .8 3.5 .8 7.5 0 11 0 0-6-1.5-8.2-3.5h-4.6c-2.2 2-8.2 3.5-8.2 3.5-.8-3.5-.8-7.5 0-11z" fill="none" stroke="#20509a" stroke-width="1.5" stroke-linejoin="round"/><circle cx="13" cy="8" r="2.6" fill="#fff" stroke="#20509a" stroke-width="1.5"/></svg><div class="b" style="left:67px;top:712px;width:1820px;height:1px;background:#e7e7e7"></div><div class="b" style="left:67px;top:713px;width:1820px;height:1px;background:#f5f5f5"></div><div class="t " style="left:87px;top:667.94px;font-size:13.8px;line-height:16.56px;color:#474747;font-weight:400;">SR-6</div><div class="t " style="left:179px;top:657.84px;font-size:14.75px;line-height:17.7px;color:#1f55a1;font-weight:400;;-webkit-text-stroke:0.45px #1f55a1">Non-Compliance with Prudential Supervision</div><div class="t " style="left:179px;top:675.84px;font-size:14.75px;line-height:17.7px;color:#1f55a1;font-weight:400;;-webkit-text-stroke:0.45px #1f55a1">Requirements</div><div class="b" style="left:538px;top:654.0px;width:35px;height:35px;background:#cdcdd0;border-radius:50%"></div><div class="t" style="left:455.5px;width:200px;text-align:center;top:663.72px;font-size:13.5px;line-height:16.2px;color:#f4f4f4;font-weight:400;">JB</div><div class="t " style="left:582.5px;top:655.68px;font-size:14.6px;line-height:17.52px;color:#474747;font-weight:400;">James Best (Risk</div><div class="t " style="left:582.5px;top:673.68px;font-size:14.6px;line-height:17.52px;color:#474747;font-weight:400;">Manager)</div><svg class="b" style="left:757px;top:664.7px;" width="36" height="22" viewBox="0 0 36 22"><path d="M2.6 16.5A15.6 15.6 0 0 1 18.2 0.9" fill="none" stroke="#4cc94c" stroke-width="2.9"/><path d="M18.2 0.9A15.6 15.6 0 0 1 33.8 16.5" fill="none" stroke="#c90d2a" stroke-width="2.9"/><path d="M14.8 17.6L18.3 13.2 20.6 17.6z" fill="#c8c8c8"/><path d="M21.1 8.6L18.6 17.8 16.4 17z" fill="#3a3a3a"/></svg><div class="t " style="left:801.5px;top:645.61px;font-size:15.2px;line-height:18.24px;color:#474747;font-weight:400;">Out of Appetite</div><div class="t " style="left:801.5px;top:665.61px;font-size:15.2px;line-height:18.24px;color:#474747;font-weight:400;">Medium</div><div class="t " style="left:801.5px;top:685.61px;font-size:15.2px;line-height:18.24px;color:#474747;font-weight:400;">[5]</div><svg class="b" style="left:938.5px;top:657.0px;" width="34" height="34" viewBox="0 0 34 34"><circle cx="17" cy="17" r="15.3" fill="none" stroke="#eedb1f" stroke-width="2"/><path d="M17 8.4C15.6 12.5 12.2 17 12.3 21.8c0 2.4.7 4 1.8 4.7h.6c0-3.6 1-7 2.3-9.5 1.3 2.5 2.3 5.9 2.3 9.5h.7c1.3-.9 1.7-2.8 1.6-5-.1-1.8-.8-3.4-1.4-4.3-.2 1-.5 1.6-1 2-.5-4.2-1.5-7.6-2.2-10.8z" fill="#f2d00c"/></svg><div class="t " style="left:981.5px;top:657.10px;font-size:14.9px;line-height:17.88px;color:#474747;font-weight:400;">Medium</div><div class="t " style="left:981.5px;top:676.98px;font-size:14.6px;line-height:17.52px;color:#474747;font-weight:400;">15</div><svg class="b" style="left:1118px;top:657.0px;" width="34" height="34" viewBox="0 0 34 34"><circle cx="17" cy="17" r="15.3" fill="none" stroke="#4ddc4d" stroke-width="2"/><g fill="none" stroke="#4ddc4d" stroke-width="1.4"><path d="M13.6 22.6V17.6a3.4 3.4 0 0 1 6.8 0v5l1.7 1.9H11.9z" stroke-linejoin="round"/><path d="M17 12.2v2"/><circle cx="17" cy="26" r="0.9"/><path d="M9.6 18A8 8 0 0 1 13.2 10.2M12 16.8A5.5 5.5 0 0 1 14.3 12.3M24.4 18A8 8 0 0 0 20.8 10.2M22 16.8A5.5 5.5 0 0 0 19.7 12.3"/></g></svg><div class="t " style="left:1161px;top:657.10px;font-size:14.9px;line-height:17.88px;color:#474747;font-weight:400;">Low</div><div class="t " style="left:1161px;top:676.98px;font-size:14.6px;line-height:17.52px;color:#474747;font-weight:400;">2</div><div class="t " style="left:1298px;top:666.15px;font-size:14px;line-height:16.8px;color:#474747;font-weight:400;">22 Jan, 2026</div><div class="b" style="left:1478px;top:657.0px;width:34px;height:34px;box-sizing:border-box;border:2px solid #20509a;border-radius:50%"></div><div class="t" style="left:1478.0px;width:34px;text-align:center;top:665.56px;font-size:14.2px;line-height:17.04px;color:#1f4f98;font-weight:700;">31</div><div class="b" style="left:1572.5px;top:657.0px;width:34px;height:34px;box-sizing:border-box;border:2px solid #52c46c;border-radius:50%"></div><div class="t" style="left:1572.5px;width:34px;text-align:center;top:665.75px;font-size:14px;line-height:16.8px;color:#4bb865;font-weight:400;">1</div><div class="b" style="left:1787.5px;top:657.0px;width:34px;height:34px;box-sizing:border-box;border:2px solid #20509a;border-radius:50%"></div><svg class="b" style="left:1792px;top:666.0px;" width="26" height="16" viewBox="0 0 26 16"><path d="M2.5 2.5c0 0 6 1.5 8.2 3.5h4.6c2.2-2 8.2-3.5 8.2-3.5 .8 3.5 .8 7.5 0 11 0 0-6-1.5-8.2-3.5h-4.6c-2.2 2-8.2 3.5-8.2 3.5-.8-3.5-.8-7.5 0-11z" fill="none" stroke="#20509a" stroke-width="1.5" stroke-linejoin="round"/><circle cx="13" cy="8" r="2.6" fill="#fff" stroke="#20509a" stroke-width="1.5"/></svg><div class="b" style="left:67px;top:769px;width:1820px;height:1px;background:#e7e7e7"></div><div class="b" style="left:67px;top:770px;width:1820px;height:1px;background:#f5f5f5"></div><div class="t " style="left:87px;top:734.94px;font-size:13.8px;line-height:16.56px;color:#474747;font-weight:400;">SR-6</div><div class="t " style="left:179px;top:724.84px;font-size:14.75px;line-height:17.7px;color:#1f55a1;font-weight:400;;-webkit-text-stroke:0.45px #1f55a1">Strategic plan fails to align with organizational</div><div class="t " style="left:179px;top:742.84px;font-size:14.75px;line-height:17.7px;color:#1f55a1;font-weight:400;;-webkit-text-stroke:0.45px #1f55a1">business processes</div><div class="b" style="left:538px;top:721.0px;width:35px;height:35px;background:#c8302f;border-radius:50%"></div><div class="t" style="left:455.5px;width:200px;text-align:center;top:730.72px;font-size:13.5px;line-height:16.2px;color:#fff;font-weight:400;">JS</div><div class="t " style="left:582.5px;top:731.68px;font-size:14.6px;line-height:17.52px;color:#474747;font-weight:400;">Joe Smith (Director)</div><div class="t" style="left:826.0px;width:20px;text-align:center;top:732.75px;font-size:14px;line-height:16.8px;color:#474747;font-weight:400;">-</div><svg class="b" style="left:938.5px;top:724.0px;" width="34" height="34" viewBox="0 0 34 34"><circle cx="17" cy="17" r="15.3" fill="none" stroke="#4ddc4d" stroke-width="2"/><g fill="none" stroke="#4ddc4d" stroke-width="1.4"><path d="M13.6 22.6V17.6a3.4 3.4 0 0 1 6.8 0v5l1.7 1.9H11.9z" stroke-linejoin="round"/><path d="M17 12.2v2"/><circle cx="17" cy="26" r="0.9"/><path d="M9.6 18A8 8 0 0 1 13.2 10.2M12 16.8A5.5 5.5 0 0 1 14.3 12.3M24.4 18A8 8 0 0 0 20.8 10.2M22 16.8A5.5 5.5 0 0 0 19.7 12.3"/></g></svg><div class="t " style="left:981.5px;top:724.10px;font-size:14.9px;line-height:17.88px;color:#474747;font-weight:400;">Low</div><div class="t " style="left:981.5px;top:743.98px;font-size:14.6px;line-height:17.52px;color:#474747;font-weight:400;">4</div><svg class="b" style="left:1118px;top:724.0px;" width="34" height="34" viewBox="0 0 34 34"><circle cx="17" cy="17" r="15.3" fill="none" stroke="#4ddc4d" stroke-width="2"/><g fill="none" stroke="#4ddc4d" stroke-width="1.4"><path d="M13.6 22.6V17.6a3.4 3.4 0 0 1 6.8 0v5l1.7 1.9H11.9z" stroke-linejoin="round"/><path d="M17 12.2v2"/><circle cx="17" cy="26" r="0.9"/><path d="M9.6 18A8 8 0 0 1 13.2 10.2M12 16.8A5.5 5.5 0 0 1 14.3 12.3M24.4 18A8 8 0 0 0 20.8 10.2M22 16.8A5.5 5.5 0 0 0 19.7 12.3"/></g></svg><div class="t " style="left:1161px;top:724.10px;font-size:14.9px;line-height:17.88px;color:#474747;font-weight:400;">Low</div><div class="t " style="left:1161px;top:743.98px;font-size:14.6px;line-height:17.52px;color:#474747;font-weight:400;">1</div><div class="t " style="left:1298px;top:733.15px;font-size:14px;line-height:16.8px;color:#474747;font-weight:400;">03 Nov, 2026</div><div class="b" style="left:1478px;top:724.0px;width:34px;height:34px;box-sizing:border-box;border:2px solid #20509a;border-radius:50%"></div><div class="t" style="left:1478.0px;width:34px;text-align:center;top:732.56px;font-size:14.2px;line-height:17.04px;color:#1f4f98;font-weight:700;">5</div><div class="b" style="left:1787.5px;top:724.0px;width:34px;height:34px;box-sizing:border-box;border:2px solid #20509a;border-radius:50%"></div><svg class="b" style="left:1792px;top:733.0px;" width="26" height="16" viewBox="0 0 26 16"><path d="M2.5 2.5c0 0 6 1.5 8.2 3.5h4.6c2.2-2 8.2-3.5 8.2-3.5 .8 3.5 .8 7.5 0 11 0 0-6-1.5-8.2-3.5h-4.6c-2.2 2-8.2 3.5-8.2 3.5-.8-3.5-.8-7.5 0-11z" fill="none" stroke="#20509a" stroke-width="1.5" stroke-linejoin="round"/><circle cx="13" cy="8" r="2.6" fill="#fff" stroke="#20509a" stroke-width="1.5"/></svg><div class="b" style="left:0;top:0;width:1886px;height:795px;overflow:hidden"><div class="b" style="left:538px;top:790.0px;width:35px;height:35px;background:#cdcdd0;border-radius:50%"></div><div class="t " style="left:582.5px;top:789.78px;font-size:14.5px;line-height:17.4px;color:#474747;font-weight:400;">James Best (Risk</div><div class="t " style="left:801.5px;top:779.11px;font-size:15.2px;line-height:18.24px;color:#474747;font-weight:400;">Within Appetite</div><svg class="b" style="left:938.5px;top:790.5px;" width="34" height="34" viewBox="0 0 34 34"><circle cx="17" cy="17" r="15.3" fill="none" stroke="#eedb1f" stroke-width="2"/><path d="M17 8.4C15.6 12.5 12.2 17 12.3 21.8c0 2.4.7 4 1.8 4.7h.6c0-3.6 1-7 2.3-9.5 1.3 2.5 2.3 5.9 2.3 9.5h.7c1.3-.9 1.7-2.8 1.6-5-.1-1.8-.8-3.4-1.4-4.3-.2 1-.5 1.6-1 2-.5-4.2-1.5-7.6-2.2-10.8z" fill="#f2d00c"/></svg><div class="t " style="left:981.5px;top:792.10px;font-size:14.9px;line-height:17.88px;color:#474747;font-weight:400;">Medium</div><svg class="b" style="left:1118px;top:790.5px;" width="34" height="34" viewBox="0 0 34 34"><circle cx="17" cy="17" r="15.3" fill="none" stroke="#4ddc4d" stroke-width="2"/><g fill="none" stroke="#4ddc4d" stroke-width="1.4"><path d="M13.6 22.6V17.6a3.4 3.4 0 0 1 6.8 0v5l1.7 1.9H11.9z" stroke-linejoin="round"/><path d="M17 12.2v2"/><circle cx="17" cy="26" r="0.9"/><path d="M9.6 18A8 8 0 0 1 13.2 10.2M12 16.8A5.5 5.5 0 0 1 14.3 12.3M24.4 18A8 8 0 0 0 20.8 10.2M22 16.8A5.5 5.5 0 0 0 19.7 12.3"/></g></svg><div class="t " style="left:1161px;top:792.10px;font-size:14.9px;line-height:17.88px;color:#474747;font-weight:400;">Low</div><div class="b" style="left:1478px;top:790.5px;width:34px;height:34px;box-sizing:border-box;border:2px solid #20509a;border-radius:50%"></div><div class="b" style="left:1572.5px;top:790.5px;width:34px;height:34px;box-sizing:border-box;border:2px solid #52c46c;border-radius:50%"></div><div class="b" style="left:1611.5px;top:790.5px;width:34px;height:34px;box-sizing:border-box;border:2px solid #f0a830;border-radius:50%"></div><div class="b" style="left:1787.5px;top:790.5px;width:34px;height:34px;box-sizing:border-box;border:2px solid #20509a;border-radius:50%"></div></div><div class="b" style="left:1887px;top:270px;width:11px;height:536px;background:#dedede"></div><div class="b" style="left:1889px;top:282px;width:6px;height:361px;background:#0b4f9e;border-radius:3px;box-shadow:0 0 0 1px #cfe3fb"></div><svg class="b" style="left:1887px;top:272px;" width="11" height="8" viewBox="0 0 11 8"><path d="M2 6.5L5.5 1.5L9 6.5z" fill="#0b4f9e"/></svg><svg class="b" style="left:1887px;top:786px;" width="11" height="8" viewBox="0 0 11 8"><path d="M2 1.5L5.5 6.5L9 1.5z" fill="#0b4f9e"/></svg><div class="b" style="left:66px;top:795px;width:1821px;height:11px;background:#dcdcdc"></div><div class="b" style="left:79px;top:797px;width:1764px;height:6px;background:#0b4f9e;border-radius:3px;box-shadow:0 0 0 1px #cfe3fb"></div><svg class="b" style="left:67px;top:795px;" width="9" height="11" viewBox="0 0 9 11"><path d="M7 2.5L2.5 5.5L7 8.5z" fill="#0b4f9e"/></svg><svg class="b" style="left:1877px;top:795px;" width="9" height="11" viewBox="0 0 9 11"><path d="M2 2.5L6.5 5.5L2 8.5z" fill="#0b4f9e"/></svg><div class="t " style="left:66px;top:826.09px;font-size:14.7px;line-height:17.639999999999997px;color:#3d3d3d;font-weight:400;">Items per page</div><div class="b" style="left:172.5px;top:815.5px;width:59px;height:34px;box-sizing:border-box;border:1px solid #dcdcdc;border-radius:7px;background:#fff"></div><div class="t " style="left:177.5px;top:826.28px;font-size:14.5px;line-height:17.4px;color:#8a8a8a;font-weight:400;">30</div><svg class="b" style="left:211px;top:828px;" width="12" height="10" viewBox="0 0 12 10"><path d="M1.5 1.5h9L6 8.5z" fill="#222"/></svg><div class="b" style="left:252px;top:816px;width:1px;height:33px;background:#e3e3e3"></div><div class="t " style="left:267px;top:826.84px;font-size:13.9px;line-height:16.68px;color:#3d3d3d;font-weight:400;">1 - 10 Of 10 Items</div><svg class="b" style="left:1536px;top:820px;" width="20" height="26" viewBox="0 0 20 26"><rect x="2" y="1.5" width="2.6" height="22.5" fill="#6f8fc4"/><path d="M17 1.5v22.5L5 12.75z" fill="#6f8fc4"/></svg><svg class="b" style="left:1558px;top:820px;" width="20" height="26" viewBox="0 0 20 26"><path d="M15 2.5L5 12.75 15 23" fill="none" stroke="#6f8fc4" stroke-width="2.4"/></svg><div class="b" style="left:1596px;top:817px;width:32px;height:32px;background:#4674b4;border-radius:50%"></div><div class="t" style="left:1596.0px;width:32px;text-align:center;top:825.25px;font-size:14px;line-height:16.8px;color:#fff;font-weight:700;">1</div><svg class="b" style="left:1646px;top:820px;" width="20" height="26" viewBox="0 0 20 26"><path d="M5 2.5L15 12.75 5 23" fill="none" stroke="#6f8fc4" stroke-width="2.4"/></svg><svg class="b" style="left:1675px;top:820px;" width="20" height="26" viewBox="0 0 20 26"><path d="M2 1.5v22.5L14 12.75z" fill="#6f8fc4"/><rect x="14.2" y="1.5" width="2.6" height="22.5" fill="#6f8fc4"/></svg><div class="b" style="left:1714px;top:815px;width:1px;height:35px;background:#e3e3e3"></div><div class="t " style="left:1735px;top:826.18px;font-size:14.6px;line-height:17.52px;color:#3d3d3d;font-weight:400;">Go to page</div><div class="b" style="left:1817px;top:815.5px;width:50px;height:34px;box-sizing:border-box;border:1px solid #e0e0e0;border-radius:7px;background:#fff"></div><div class="t" style="left:1822.0px;width:40px;text-align:center;top:826.28px;font-size:14.5px;line-height:17.4px;color:#333;font-weight:400;">1</div><div class="t " style="left:1876px;top:826.18px;font-size:14.6px;line-height:17.52px;color:#3d3d3d;font-weight:400;">of 1</div></body></html>
